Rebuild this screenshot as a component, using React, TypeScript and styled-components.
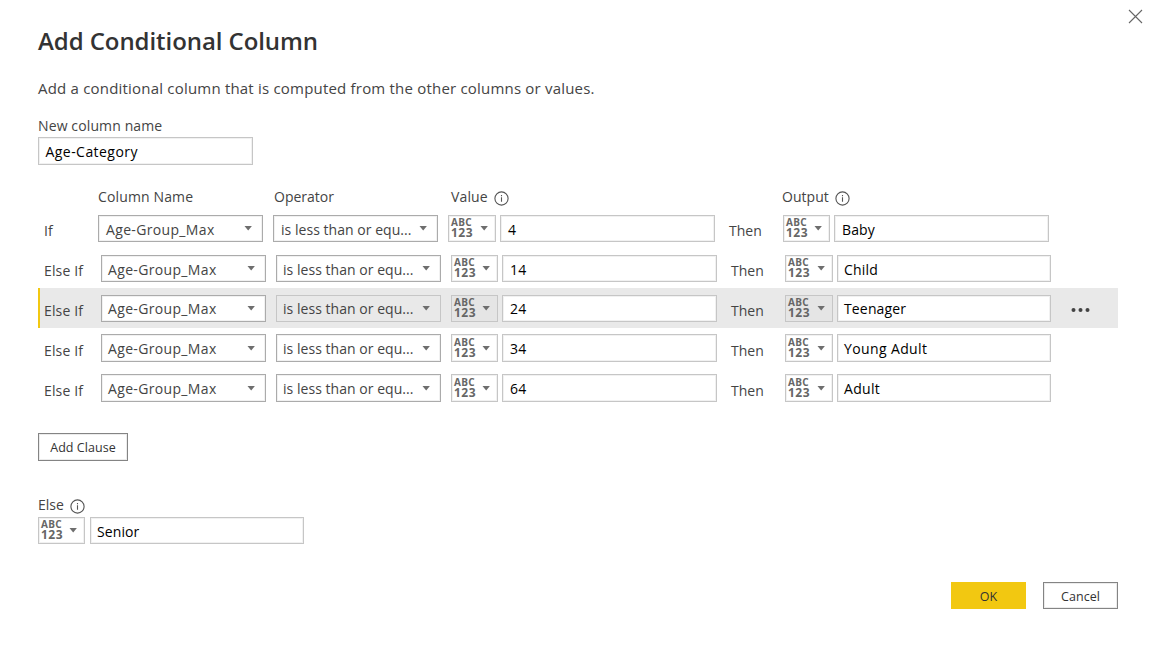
import React from 'react';
import styled, { createGlobalStyle, css } from 'styled-components';

const GlobalStyle = createGlobalStyle`
  * { box-sizing: border-box; }
  body {
    margin: 0;
    background: #fff;
    color: #444;
    font-family: "Open Sans", "Noto Sans", sans-serif;
    font-size: 14px;
    line-height: 20px;
  }
`;

const Dialog = styled.main`
  position: relative;
  width: 1155px;
  height: 646px;
  padding: 25px 37px 0 38px;
  display: flex;
  flex-direction: column;
  align-items: stretch;
  overflow: hidden;
`;

const CloseButton = styled.button`
  position: absolute;
  top: 9px;
  right: 12px;
  width: 15px;
  height: 15px;
  padding: 0;
  border: 0;
  background: none;
  svg { display: block; }
`;

const Title = styled.h1`
  margin: 0;
  font-size: 24px;
  font-weight: 600;
  line-height: 32px;
  letter-spacing: -0.07px;
  color: #333;
`;

const Description = styled.p`
  margin: 21px 0 18px;
  font-size: 15px;
  letter-spacing: 0.2px;
`;

const Text = styled.span<{ $tracking?: number }>`
  white-space: nowrap;
  letter-spacing: ${p => p.$tracking ?? 0.15}px;
`;

const FieldLabel = styled.label`
  display: flex;
  height: 20px;
  gap: 6px;
`;

const box = css`
  display: flex;
  height: 100%;
  border: 1px solid #c6c6c6;
  background: #fff;
  box-shadow: inset 0 0 0 1px #f1f1f1;
`;

const TextBox = styled.div<{ $top?: number; $indent?: number }>`
  ${box}
  padding: ${p => p.$top ?? 4}px 0 0 ${p => p.$indent ?? 6}px;
  color: #000;
`;

const NameField = styled.div`
  width: 215px;
  height: 28px;
  margin-top: 1px;
`;

const Select = styled.div<{ $muted?: boolean; $top: number; $indent: number }>`
  ${box}
  justify-content: space-between;
  padding: ${p => p.$top}px 10px 0 ${p => p.$indent}px;
  border-color: ${p => (p.$muted ? '#c6c6c6' : '#ababab')};
  ${p => p.$muted && 'background: #e9e9e9; box-shadow: none;'}
`;

const TypePicker = styled.div<{ $muted?: boolean; $tall?: boolean }>`
  ${box}
  justify-content: space-between;
  padding: ${p => (p.$tall ? 3 : 2)}px 7px 0 2px;
  ${p => p.$muted && 'background: #e5e5e5; box-shadow: none;'}
`;

const TypeGlyph = styled.div`
  display: flex;
  flex-direction: column;
  font-weight: 700;
  color: #666;
`;

const Letters = styled.span`
  height: 9px;
  font-size: 10px;
  line-height: 9px;
  letter-spacing: 0.35px;
`;

const Digits = styled.span`
  height: 11px;
  font-size: 12px;
  line-height: 11px;
  letter-spacing: 0.5px;
`;

const Caret = styled.svg<{ $top: number }>`
  display: block;
  flex: none;
  margin-top: ${p => p.$top}px;
`;

const InfoSvg = styled.svg`
  display: block;
  margin-top: 4px;
`;

const Headings = styled.div`
  display: grid;
  grid-template-columns: 60px 176px 177px 331px auto;
  height: 21px;
  margin-top: 22px;
`;

const Clause = styled.div<{ $first?: boolean; $active?: boolean; $tall?: boolean }>`
  display: grid;
  grid-template-columns: ${p =>
    p.$first
      ? '60px 165px 10px 165px 10px 48px 4px 215px 68px 47px 4px 215px'
      : '63px 165px 10px 165px 10px 47px 4px 215px 68px 48px 4px 214px'}  1fr;
  grid-template-rows: ${p => (p.$tall ? 28 : 27)}px;
  height: 40px;
  padding-top: ${p => (p.$tall ? 6 : 7)}px;
  ${p => p.$active && 'background: #e9e9e9; box-shadow: inset 2px 0 0 #f2c811;'}
`;

const Keyword = styled.div<{ $top: number; $indent: number }>`
  padding: ${p => p.$top}px 0 0 ${p => p.$indent}px;
`;

const Gap = styled.div``;

const More = styled.svg`
  display: block;
  margin: 12px 0 0 20px;
`;

const Button = styled.button<{ $primary?: boolean; $width: number; $height: number }>`
  width: ${p => p.$width}px;
  height: ${p => p.$height}px;
  padding: ${p => (p.$height > 27 ? 0 : 2)}px 0 0;
  font: 12.5px/23px "Open Sans", "Noto Sans", sans-serif;
  letter-spacing: 0.05px;
  color: #333;
  background: ${p => (p.$primary ? '#f2c811' : '#fff')};
  border: 1px solid ${p => (p.$primary ? '#f2c811' : '#848484')};
  ${p => !p.$primary && 'box-shadow: inset 0 0 0 1px #ececec;'}
`;

const AddRow = styled.div`
  margin: 25px 0 34px;
  height: 28px;
  display: flex;
`;

const ElseFields = styled.div`
  display: grid;
  grid-template-columns: 47px 214px;
  column-gap: 5px;
  height: 27px;
  margin-top: 2px;
`;

const Footer = styled.footer`
  display: flex;
  justify-content: flex-end;
  gap: 17px;
  margin-top: 38px;
`;

const DownArrow = ({ top }: { top: number }) => (
  <Caret $top={top} width="8" height="5" viewBox="0 0 8 5">
    <path d="M0.5 0h7.4L4.2 4.4z" fill="#6e6e6e" />
  </Caret>
);

const Info = () => (
  <InfoSvg width="15" height="15" viewBox="0 0 15 15" fill="none">
    <circle cx="7.5" cy="7.5" r="6.6" stroke="#555" strokeWidth="1.1" />
    <path d="M7.5 6.3v4.4M7.5 4v1.2" stroke="#555" strokeWidth="1.1" />
  </InfoSvg>
);

const AnyType = ({ muted, tall }: { muted?: boolean; tall?: boolean }) => (
  <TypePicker $muted={muted} $tall={tall}>
    <TypeGlyph>
      <Letters>ABC</Letters>
      <Digits>123</Digits>
    </TypeGlyph>
    <DownArrow top={8} />
  </TypePicker>
);

type Rule = {
  value: string;
  output: string;
  tracking: number;
  active?: boolean;
  tall?: boolean;
};

const rules: Rule[] = [
  { value: '4', output: 'Baby', tracking: 0.1 },
  { value: '14', output: 'Child', tracking: 0.2 },
  { value: '24', output: 'Teenager', tracking: 0.15, active: true },
  { value: '34', output: 'Young Adult', tracking: 0.38, tall: true },
  { value: '64', output: 'Adult', tracking: 0.3, tall: true },
];

const ClauseRow = ({ rule, index }: { rule: Rule; index: number }) => {
  const top = index === 2 ? 3 : 4;
  const arrowTop = index < 2 ? 6 : 7;
  const keywordTop = rule.tall ? 7 : 6;
  const first = index === 0;
  const indent = first ? 7 : 6;
  return (
    <Clause $first={first} $active={rule.active} $tall={rule.tall}>
      <Keyword $top={keywordTop} $indent={6}>
        <Text $tracking={0.13}>{first ? 'If' : 'Else If'}</Text>
      </Keyword>
      <Select $top={top} $indent={indent}>
        <Text $tracking={0.34}>Age-Group_Max</Text>
        <DownArrow top={arrowTop} />
      </Select>
      <Gap />
      <Select $muted={rule.active} $top={top} $indent={indent}>
        <Text $tracking={0.04}>is less than or equ...</Text>
        <DownArrow top={arrowTop} />
      </Select>
      <Gap />
      <AnyType muted={rule.active} tall={rule.tall} />
      <Gap />
      <TextBox $top={top} $indent={7}>
        <Text>{rule.value}</Text>
      </TextBox>
      <Keyword $top={keywordTop} $indent={14}>
        <Text $tracking={0}>Then</Text>
      </Keyword>
      <AnyType muted={rule.active} tall={rule.tall} />
      <Gap />
      <TextBox $top={top} $indent={indent}>
        <Text $tracking={rule.tracking}>{rule.output}</Text>
      </TextBox>
      {rule.active && (
        <More width="20" height="6" viewBox="0 0 20 6" fill="#444">
          <circle cx="2.5" cy="3" r="2" />
          <circle cx="9.5" cy="3" r="2" />
          <circle cx="16.5" cy="3" r="2" />
        </More>
      )}
    </Clause>
  );
};

export default function App() {
  return (
    <>
      <GlobalStyle />
      <Dialog>
        <CloseButton aria-label="Close">
          <svg width="15" height="15" viewBox="0 0 15 15">
            <path d="M1 1l13 13M14 1L1 14" stroke="#666" strokeWidth="1.1" />
          </svg>
        </CloseButton>
        <Title>Add Conditional Column</Title>
        <Description>
          Add a conditional column that is computed from the other columns or values.
        </Description>
        <FieldLabel>
          <Text $tracking={0.12}>New column name</Text>
        </FieldLabel>
        <NameField>
          <TextBox $indent={6.5}>
            <Text $tracking={0.45}>Age-Category</Text>
          </TextBox>
        </NameField>
        <Headings>
          <Gap />
          <FieldLabel><Text $tracking={0.14}>Column Name</Text></FieldLabel>
          <FieldLabel><Text $tracking={0.01}>Operator</Text></FieldLabel>
          <FieldLabel><Text $tracking={0.15}>Value</Text><Info /></FieldLabel>
          <FieldLabel><Text $tracking={0.05}>Output</Text><Info /></FieldLabel>
        </Headings>
        {rules.map((rule, i) => (
          <ClauseRow key={rule.output} rule={rule} index={i} />
        ))}
        <AddRow>
          <Button $width={90} $height={28}>Add Clause</Button>
        </AddRow>
        <FieldLabel>
          <Text $tracking={0}>Else</Text>
          <Info />
        </FieldLabel>
        <ElseFields>
          <AnyType />
          <TextBox>
            <Text $tracking={0.1}>Senior</Text>
          </TextBox>
        </ElseFields>
        <Footer>
          <Button $primary $width={75} $height={27}>OK</Button>
          <Button $width={75} $height={27}>Cancel</Button>
        </Footer>
      </Dialog>
    </>
  );
}
